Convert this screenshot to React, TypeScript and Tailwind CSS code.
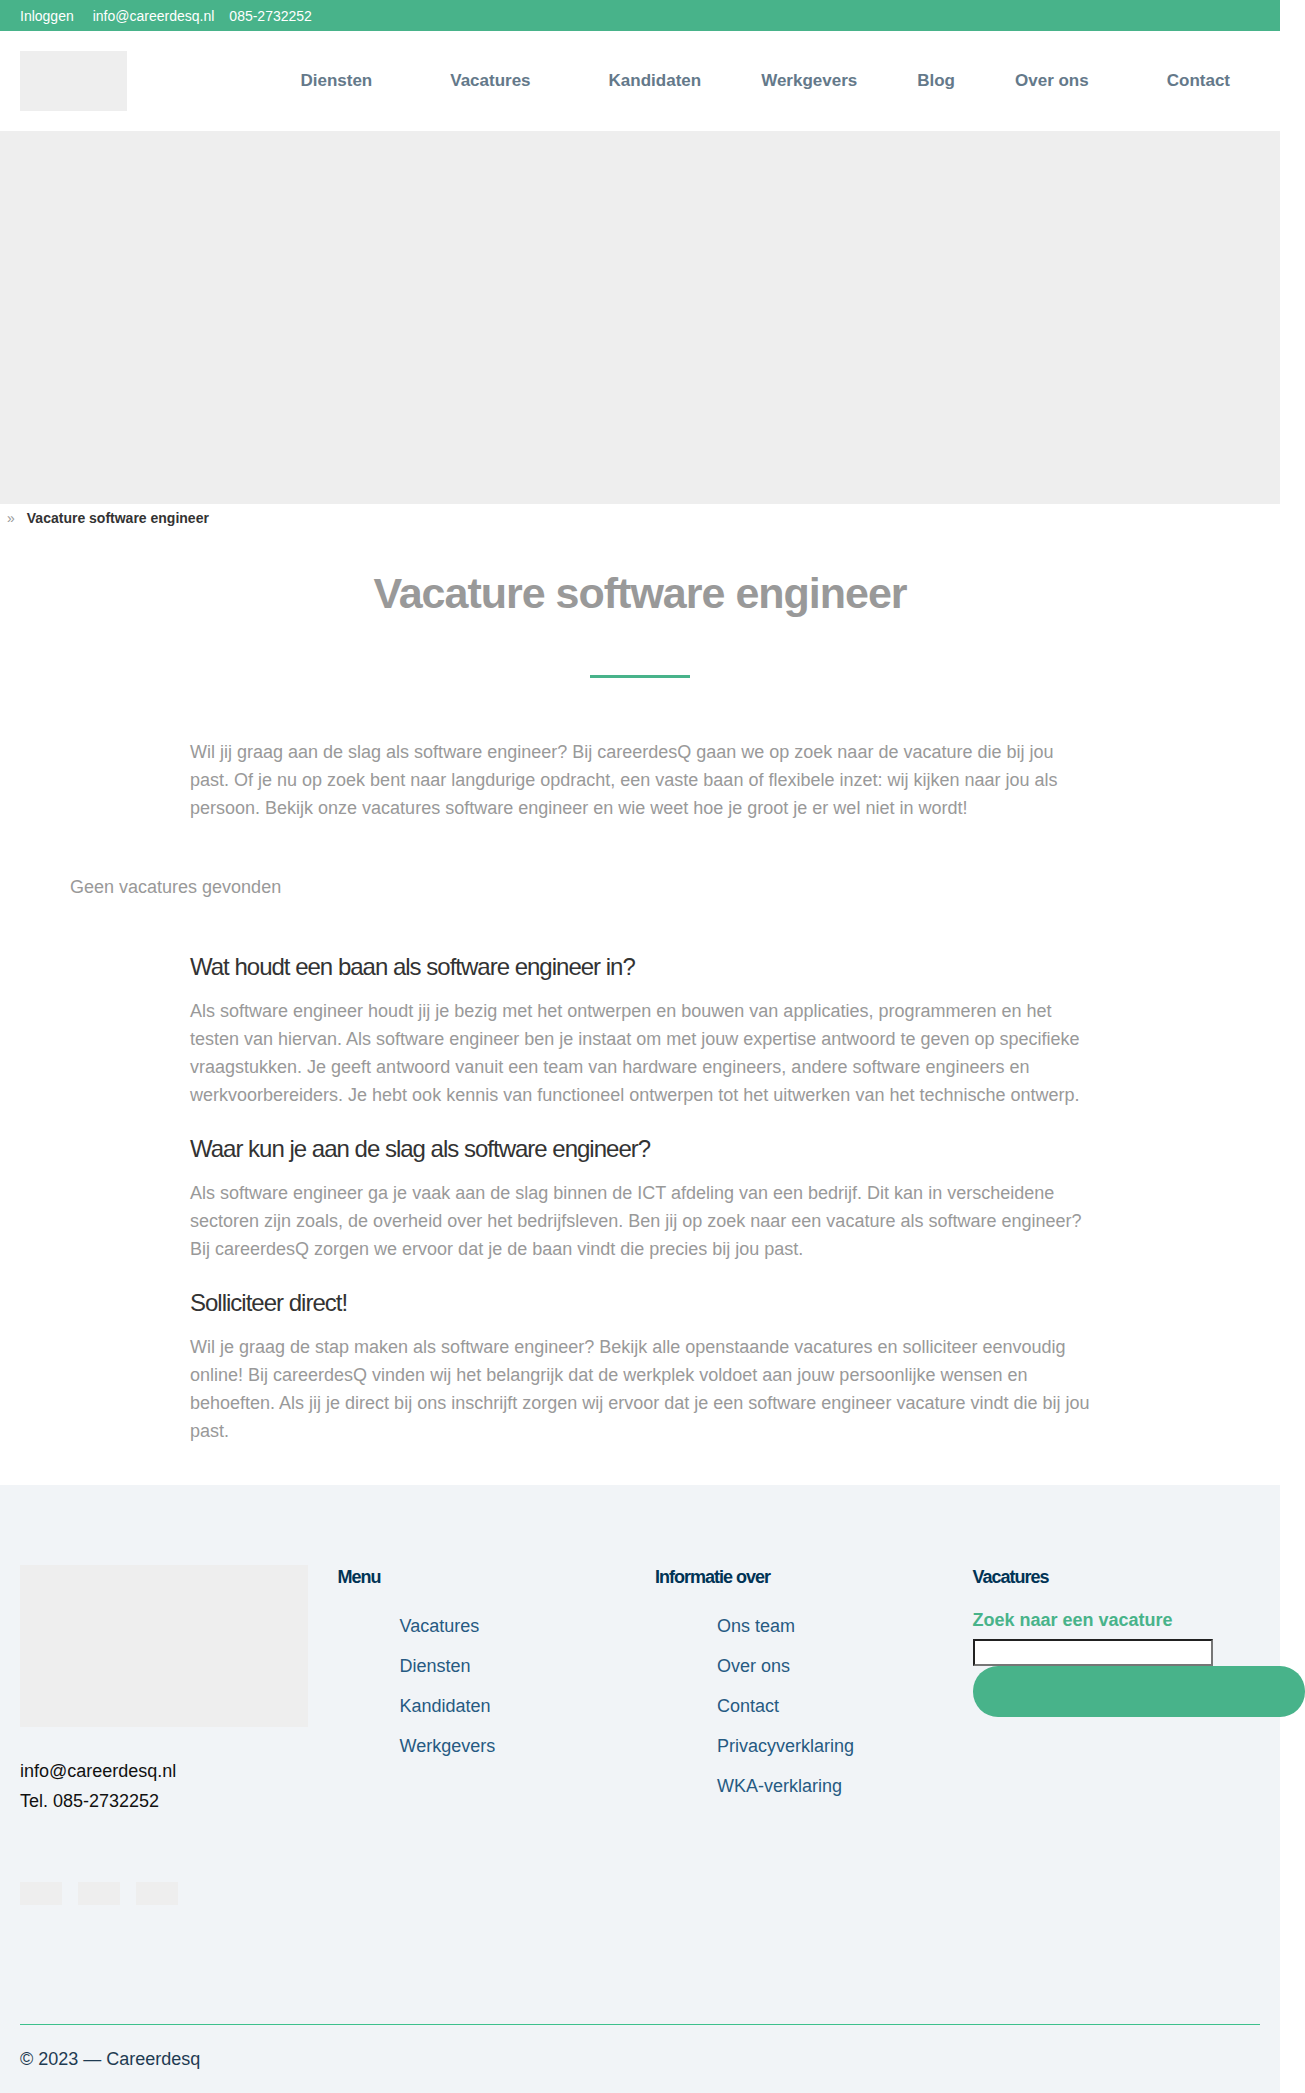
const navItems = [
  { label: "Diensten", hasMenu: true },
  { label: "Vacatures", hasMenu: true },
  { label: "Kandidaten", hasMenu: false },
  { label: "Werkgevers", hasMenu: false },
  { label: "Blog", hasMenu: false },
  { label: "Over ons", hasMenu: true },
  { label: "Contact", hasMenu: false },
];

const sections = [
  {
    title: "Wat houdt een baan als software engineer in?",
    body: "Als software engineer houdt jij je bezig met het ontwerpen en bouwen van applicaties, programmeren en het testen van hiervan. Als software engineer ben je instaat om met jouw expertise antwoord te geven op specifieke vraagstukken. Je geeft antwoord vanuit een team van hardware engineers, andere software engineers en werkvoorbereiders. Je hebt ook kennis van functioneel ontwerpen tot het uitwerken van het technische ontwerp.",
  },
  {
    title: "Waar kun je aan de slag als software engineer?",
    body: "Als software engineer ga je vaak aan de slag binnen de ICT afdeling van een bedrijf. Dit kan in verscheidene sectoren zijn zoals, de overheid over het bedrijfsleven. Ben jij op zoek naar een vacature als software engineer? Bij careerdesQ zorgen we ervoor dat je de baan vindt die precies bij jou past.",
  },
  {
    title: "Solliciteer direct!",
    body: "Wil je graag de stap maken als software engineer? Bekijk alle openstaande vacatures en solliciteer eenvoudig online! Bij careerdesQ vinden wij het belangrijk dat de werkplek voldoet aan jouw persoonlijke wensen en behoeften. Als jij je direct bij ons inschrijft zorgen wij ervoor dat je een software engineer vacature vindt die bij jou past.",
  },
];

const footerLists = [
  { title: "Menu", links: ["Vacatures", "Diensten", "Kandidaten", "Werkgevers"] },
  {
    title: "Informatie over",
    links: ["Ons team", "Over ons", "Contact", "Privacyverklaring", "WKA-verklaring"],
  },
];

function TopBar() {
  return (
    <div className="flex h-[31px] items-center bg-[#48b38a] px-5 text-sm text-white">
      <a href="#inloggen" className="mr-[19px]">Inloggen</a>
      <a href="mailto:info@careerdesq.nl" className="mr-[15px]">info@careerdesq.nl</a>
      <a href="tel:0852732252">085-2732252</a>
    </div>
  );
}

function Header() {
  return (
    <header className="flex h-[100px] items-center justify-between px-5">
      <a href="#home" aria-label="Careerdesq" className="block h-[60px] w-[107px] bg-[#eeeeee]" />
      <nav>
        <ul className="flex text-[17px] font-bold text-[#64798a]">
          {navItems.map((item) => (
            <li key={item.label} className={item.hasMenu ? "pr-[48px] pl-[30px]" : "px-[30px]"}>
              <a href="#menu">{item.label}</a>
            </li>
          ))}
        </ul>
      </nav>
    </header>
  );
}

function FooterTitle({ children }: { children: string }) {
  return (
    <h3 className="text-lg leading-6 font-bold tracking-[-1px] text-[#003355]">{children}</h3>
  );
}

function Footer() {
  return (
    <footer className="bg-[#f1f4f7] px-5 pt-20">
      <div className="grid grid-cols-4 gap-[30px] text-lg">
        <div>
          <div className="aspect-video bg-[#eeeeee]" />
          <div className="mt-[29px] leading-[30px] text-[#111111]">
            <p><a href="mailto:info@careerdesq.nl">info@careerdesq.nl</a></p>
            <p>Tel. 085-2732252</p>
          </div>
          <div className="mt-[66px] flex gap-4">
            <a href="#linkedin" aria-label="LinkedIn" className="h-[23px] w-[42px] bg-[#eeeeee]" />
            <a href="#facebook" aria-label="Facebook" className="h-[23px] w-[42px] bg-[#eeeeee]" />
            <a href="#instagram" aria-label="Instagram" className="h-[23px] w-[42px] bg-[#eeeeee]" />
          </div>
        </div>
        {footerLists.map((list) => (
          <div key={list.title}>
            <FooterTitle>{list.title}</FooterTitle>
            <ul className="mt-[17px] pl-[62px] leading-10 text-[#265a82]">
              {list.links.map((link) => (
                <li key={link}><a href="#pagina">{link}</a></li>
              ))}
            </ul>
          </div>
        ))}
        <form>
          <FooterTitle>Vacatures</FooterTitle>
          <label htmlFor="zoek" className="mt-[17px] block leading-7 font-bold text-[#48b38a]">
            Zoek naar een vacature
          </label>
          <input
            id="zoek"
            type="text"
            className="mt-[5px] block h-[27px] w-60 border-2 border-t-[#212121] border-r-[#767676] border-b-[#767676] border-l-[#212121] bg-white px-1 text-base"
          />
          <button type="button" aria-label="Zoeken" className="block h-[51px] w-[332px] rounded-[25px] bg-[#48b38a]" />
        </form>
      </div>
      <div className="mt-[119px] border-t border-[#3dc08c] pt-5 pb-5 text-lg leading-7 text-[#1f3b52]">
        © 2023 — Careerdesq
      </div>
    </footer>
  );
}

export default function App() {
  return (
    <div className="bg-white pr-[25px] font-['Liberation_Sans',Arial,sans-serif] text-[#999999]">
      <TopBar />
      <Header />
      <div className="h-[373px] bg-[#eeeeee]" />
      <main>
        <nav aria-label="Kruimelpad" className="flex gap-3 px-[7px] py-1 text-sm leading-5">
          <span>»</span>
          <span className="font-bold text-[#333333]">Vacature software engineer</span>
        </nav>
        <h1 className="mt-9 text-center text-[43px] leading-[50px] font-bold tracking-[-1px]">
          Vacature software engineer
        </h1>
        <div className="mx-auto mt-[57px] h-[3px] w-[100px] bg-[#48b38a]" />
        <p className="mx-auto mt-[60px] max-w-[900px] text-lg leading-7">
          Wil jij graag aan de slag als software engineer? Bij careerdesQ gaan we op zoek naar de
          vacature die bij jou past. Of je nu op zoek bent naar langdurige opdracht, een vaste baan
          of flexibele inzet: wij kijken naar jou als persoon. Bekijk onze vacatures software
          engineer en wie weet hoe je groot je er wel niet in wordt!
        </p>
        <p className="mt-[51px] px-[70px] text-lg leading-7">Geen vacatures gevonden</p>
        <div className="mx-auto mt-12 max-w-[900px] pb-10">
          {sections.map((section) => (
            <section key={section.title} className="mb-[22px] last:mb-0">
              <h2 className="text-2xl leading-9 tracking-[-1px] text-[#333333]">{section.title}</h2>
              <p className="mt-3 text-lg leading-7">{section.body}</p>
            </section>
          ))}
        </div>
      </main>
      <Footer />
    </div>
  );
}
